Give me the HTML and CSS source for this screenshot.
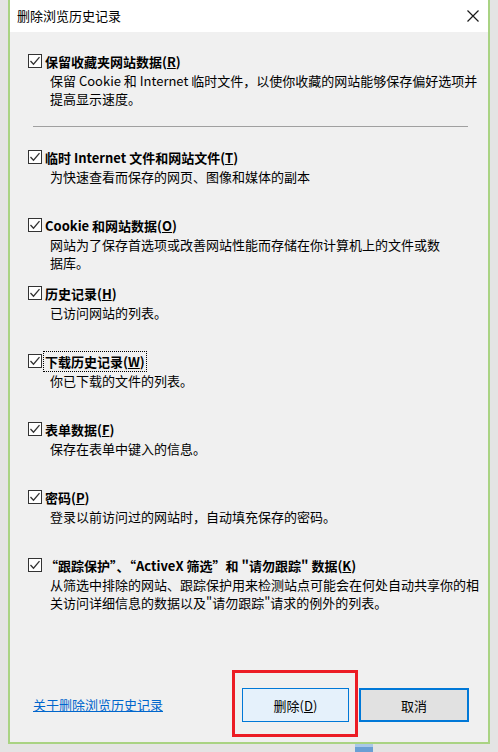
FILE: index.html
```html
<!DOCTYPE html>
<html lang="zh-CN">
<head>
    <meta charset="UTF-8">
    <meta name="viewport" content="width=device-width, initial-scale=1.0">
    <title>删除浏览历史记录</title>
    <link rel="stylesheet" href="styles.css">
</head>

<body>
    <div class="janela">
        <div class="titulo">
            <span>删除浏览历史记录</span>
            <svg class="fechar" width="12" height="12" viewBox="0 0 12 12">
                <path d="M0.5 0.5 L11.5 11.5 M11.5 0.5 L0.5 11.5" stroke="#1a1a1a" stroke-width="1.2" fill="none"/>
            </svg>
        </div>

        <div class="conteudo">
            <div class="item primeiro">
                <label class="rotulo"><span class="caixa"></span><b>保留收藏夹网站数据(<u>R</u>)</b></label>
                <p class="desc">保留 Cookie 和 Internet 临时文件，以使你收藏的网站能够保存偏好选项并<br>提高显示速度。</p>
            </div>

            <hr class="divisor">

            <div class="item">
                <label class="rotulo"><span class="caixa"></span><b>临时 Internet 文件和网站文件(<u>T</u>)</b></label>
                <p class="desc">为快速查看而保存的网页、图像和媒体的副本</p>
            </div>

            <div class="item">
                <label class="rotulo"><span class="caixa"></span><b>Cookie 和网站数据(<u>O</u>)</b></label>
                <p class="desc">网站为了保存首选项或改善网站性能而存储在你计算机上的文件或数<br>据库。</p>
            </div>

            <div class="item">
                <label class="rotulo"><span class="caixa"></span><b>历史记录(<u>H</u>)</b></label>
                <p class="desc">已访问网站的列表。</p>
            </div>

            <div class="item">
                <label class="rotulo"><span class="caixa"></span><b class="foco">下载历史记录(<u>W</u>)</b></label>
                <p class="desc">你已下载的文件的列表。</p>
            </div>

            <div class="item">
                <label class="rotulo"><span class="caixa"></span><b>表单数据(<u>F</u>)</b></label>
                <p class="desc">保存在表单中键入的信息。</p>
            </div>

            <div class="item">
                <label class="rotulo"><span class="caixa"></span><b>密码(<u>P</u>)</b></label>
                <p class="desc">登录以前访问过的网站时，自动填充保存的密码。</p>
            </div>

            <div class="item">
                <label class="rotulo"><span class="caixa"></span><b>“跟踪保护”、“ActiveX 筛选”和 "请勿跟踪" 数据(<u>K</u>)</b></label>
                <p class="desc">从筛选中排除的网站、跟踪保护用来检测站点可能会在何处自动共享你的相<br>关访问详细信息的数据以及"请勿跟踪"请求的例外的列表。</p>
            </div>

            <div class="rodape">
                <a href="#" class="link">关于删除浏览历史记录</a>
                <div class="destaque">
                    <button class="botao principal">删除(<u>D</u>)</button>
                </div>
                <button class="botao cancelar">取消</button>
            </div>
        </div>
    </div>

    <div class="tarefa">
        <span class="icone"></span>
    </div>
</body>

</html>
```

FILE: styles.css
```css
* {
    box-sizing: border-box;
}

body {
    margin: 0;
    height: 752px;
    overflow: hidden;
    background-color: #e4e4e4;
    font-family: "Noto Sans CJK SC", sans-serif;
    font-size: 13px;
    color: #000;
}

.janela {
    margin-left: 8px;
    width: 482px;
    height: 744px;
    border: 2px solid #a9d383;
    border-top: none;
    background-color: #f0f0f0;
    display: flex;
    flex-direction: column;
}

.titulo {
    height: 32px;
    background-color: #fff;
    display: flex;
    align-items: center;
    justify-content: space-between;
    padding: 0 9px 0 7px;
    font-size: 13px;
    line-height: 18px;
}

.fechar {
    display: block;
    margin-top: -1px;
}

.conteudo {
    flex: 1;
    display: flex;
    flex-direction: column;
    padding-top: 19px;
}

.item {
    height: 68px;
    padding-left: 18px;
}

.item.primeiro {
    height: auto;
}

.rotulo {
    display: flex;
    align-items: center;
    height: 20px;
    line-height: 19px;
}

.rotulo b {
    font-weight: bold;
}

.caixa {
    width: 14px;
    height: 14px;
    margin-right: 3px;
    flex-shrink: 0;
    border: 1px solid #333;
    background: #fff url("data:image/svg+xml;utf8,<svg xmlns='http://www.w3.org/2000/svg' width='12' height='12'><path d='M1.5 6 L4.5 9.2 L10.5 2.2' stroke='%23333' stroke-width='1.3' fill='none'/></svg>") no-repeat center;
}

.foco {
    outline: 1px dotted #000;
    padding: 0 1px;
    margin-left: -1px;
}

.desc {
    margin: 1px 0 0 22px;
    line-height: 18px;
    white-space: nowrap;
}

.divisor {
    margin: 18px 20px 20px 23px;
    border: none;
    border-top: 1px solid #a0a0a0;
    height: 0;
}

.rodape {
    margin-top: auto;
    display: flex;
    align-items: flex-end;
    padding: 0 19px 5px 23px;
}

.link {
    margin-right: auto;
    margin-bottom: 23px;
    color: #0066cc;
    line-height: 18px;
}

.destaque {
    border: 3px solid #ec1c24;
    padding: 15px 6px 12px 7px;
}

.botao {
    font-family: inherit;
    font-size: 13px;
    height: 34px;
    color: #000;
    padding: 0;
}

.principal {
    width: 107px;
    background-color: #e5f1fb;
    border: 1px solid #0078d7;
}

.cancelar {
    width: 110px;
    margin-left: 1px;
    margin-bottom: 15px;
    background-color: #e1e1e1;
    border: 2px solid #0078d7;
}

.tarefa {
    height: 8px;
    padding-left: 355px;
}

.icone {
    display: block;
    width: 18px;
    height: 8px;
    background-color: #6a9fd4;
    border-top: 3px solid #a9c8e8;
}
```
